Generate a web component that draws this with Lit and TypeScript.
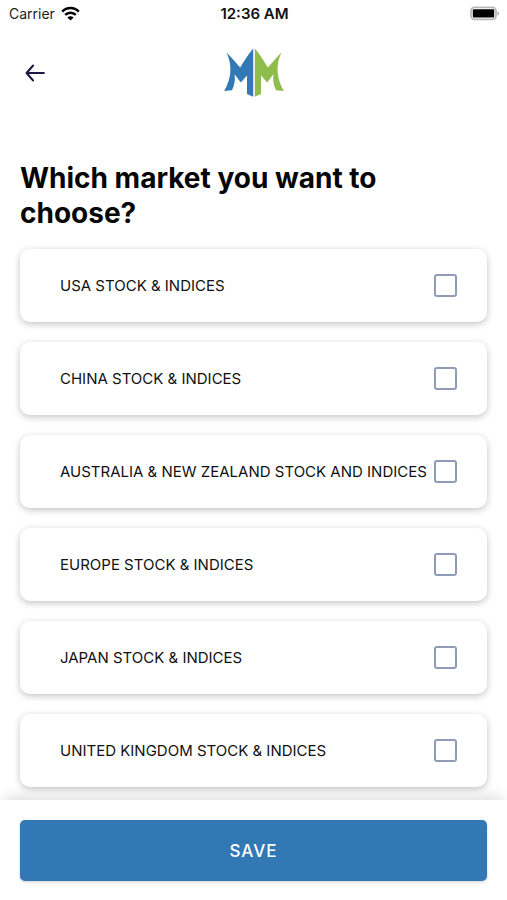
import { LitElement, html, css } from "lit";
import { customElement, property, state } from "lit/decorators.js";

@customElement("status-bar")
class StatusBar extends LitElement {
  static styles = css`
    :host {
      display: grid;
      grid-template-columns: 1fr auto 1fr;
      align-items: center;
      height: 28px;
      padding: 0 7px 0 9px;
      font-size: 14px;
      line-height: 20px;
      color: #1c1c1c;
    }
    .carrier {
      display: flex;
      align-items: center;
      gap: 6px;
    }
    .time {
      font-size: 15px;
      font-weight: 600;
      color: #111;
    }
    .battery {
      justify-self: end;
    }
    svg {
      display: block;
    }
  `;

  render() {
    return html`
      <div class="carrier">
        <span>Carrier</span>
        <svg width="19" height="16" viewBox="0 0 19 16" aria-label="Wi-Fi">
          <g fill="none" stroke="#000" stroke-width="2.5">
            <path d="M1.2 5.6C5.8 0.8 13.2 0.8 17.8 5.6" />
            <path d="M4.2 8.9C7.1 5.9 11.9 5.9 14.8 8.9" />
          </g>
          <path d="M6.4 11.4C8.1 9.7 10.9 9.7 12.6 11.4L9.5 14.6Z" fill="#000" />
        </svg>
      </div>
      <span class="time">12:36 AM</span>
      <svg class="battery" width="30" height="16" viewBox="0 0 30 16" aria-label="Battery full">
        <rect x="1" y="1.4" width="25" height="12" rx="3.6" fill="#fff" stroke="#b9b9b9" stroke-width="1.8" />
        <rect x="2.8" y="3.2" width="21.4" height="8.4" rx="1" fill="#000" />
        <path d="M27.4 5.2C29.6 6 29.6 8.8 27.4 9.6Z" fill="#aaa" />
      </svg>
    `;
  }
}

@customElement("market-option")
class MarketOption extends LitElement {
  @property() label = "";

  static styles = css`
    :host {
      display: block;
    }
    .card {
      display: flex;
      align-items: center;
      justify-content: space-between;
      gap: 6px;
      box-sizing: border-box;
      min-height: 73px;
      padding: 8px 30px 8px 40px;
      border-radius: 10px;
      background: #fff;
      box-shadow: 0 2px 7px rgba(0, 0, 0, 0.24);
      font-size: 15px;
      line-height: 20px;
      color: #111;
      cursor: pointer;
    }
    .box {
      appearance: none;
      flex: none;
      box-sizing: border-box;
      width: 23px;
      height: 23px;
      margin: 0;
      border: 2px solid #8f9bb9;
      border-radius: 3px;
      background: #fff;
      cursor: pointer;
    }
    .box:checked {
      background: #3178b5;
      border-color: #3178b5;
    }
  `;

  render() {
    return html`
      <label class="card">
        <span>${this.label}</span>
        <input class="box" type="checkbox" />
      </label>
    `;
  }
}

@customElement("app-root")
class AppRoot extends LitElement {
  @state() private markets = [
    "USA STOCK & INDICES",
    "CHINA STOCK & INDICES",
    "AUSTRALIA & NEW ZEALAND STOCK AND INDICES",
    "EUROPE STOCK & INDICES",
    "JAPAN STOCK & INDICES",
    "UNITED KINGDOM STOCK & INDICES",
  ];

  static styles = css`
    :host {
      display: flex;
      flex-direction: column;
      min-height: 100vh;
      background: #fff;
      font-family: Inter, "Liberation Sans", sans-serif;
    }
    .header {
      display: grid;
      grid-template-columns: 1fr auto 1fr;
      align-items: center;
      height: 90px;
      padding: 0 20px;
    }
    .back {
      justify-self: start;
      padding: 5px;
      border: 0;
      background: none;
      cursor: pointer;
    }
    svg {
      display: block;
    }
    .content {
      flex: 1;
      padding: 43px 20px 13px;
    }
    .title {
      margin: 0 0 18px;
      font-size: 28px;
      line-height: 35px;
      font-weight: 700;
      color: #060606;
    }
    .list {
      display: flex;
      flex-direction: column;
      gap: 20px;
      margin: 0;
      padding: 0;
      list-style: none;
    }
    .footer {
      position: sticky;
      bottom: 0;
      padding: 20px 20px 19px;
      background: #fff;
      box-shadow: 0 -8px 12px -4px rgba(0, 0, 0, 0.12);
    }
    .save {
      display: block;
      width: 100%;
      height: 61px;
      border: 0;
      border-radius: 5px;
      background: #3178b5;
      box-shadow: 0 1px 3px rgba(0, 0, 0, 0.2);
      color: #fff;
      font-family: inherit;
      font-size: 17px;
      font-weight: 500;
      letter-spacing: 1px;
      cursor: pointer;
    }
  `;

  render() {
    return html`
      <status-bar></status-bar>
      <header class="header">
        <button class="back" aria-label="Back">
          <svg width="20" height="18" viewBox="0 0 20 18" fill="none" stroke="#191943" stroke-width="2.2" stroke-linecap="round" stroke-linejoin="round">
            <path d="M18.8 9H1.6M8 1.6L1.6 9L8 16.4" />
          </svg>
        </button>
        <svg width="60" height="50" viewBox="0 0 60 50" aria-label="MM logo">
          <path fill="#3178b5" d="M2.6 4.4C7.6 9.6 11.6 14.4 16.2 19.6C19.8 13 24.2 6.4 29.2 0.4V48.8L23 46V27.6L16.8 34.4L10.6 26.2C11.4 32 10.4 37.6 8 42.2L0.2 43C7.6 30 8.4 17 2.6 4.4Z" />
          <path fill="#8fbd4b" d="M57.4 4.4C52.4 9.6 48.4 14.4 43.8 19.6C40.2 13 35.8 6.4 30.8 0.4V48.8L37 46V27.6L43.2 34.4L49.4 26.2C48.6 32 49.6 37.6 52 42.2L59.8 43C52.4 30 51.6 17 57.4 4.4Z" />
        </svg>
      </header>
      <main class="content">
        <h1 class="title">Which market you want to choose?</h1>
        <ul class="list">
          ${this.markets.map((name) => html`<li><market-option .label=${name}></market-option></li>`)}
        </ul>
      </main>
      <footer class="footer">
        <button class="save">SAVE</button>
      </footer>
    `;
  }
}
